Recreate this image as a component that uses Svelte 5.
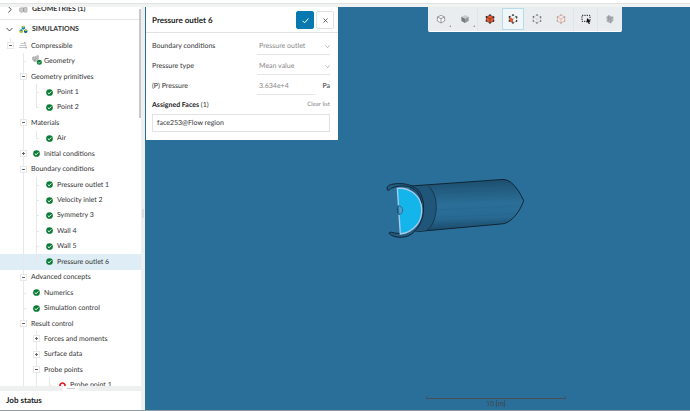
<script lang="ts">
  type Row = { slots: string[]; label: string };

  // one entry per 13px column: line, tee, end, open, closed, or an icon name
  const rows: Row[] = [
    { slots: ["open", "flow"], label: "Compressible" },
    { slots: ["", "tee", "geo"], label: "Geometry" },
    { slots: ["", "open"], label: "Geometry primitives" },
    { slots: ["", "line", "tee", "ok"], label: "Point 1" },
    { slots: ["", "line", "end", "ok"], label: "Point 2" },
    { slots: ["", "open"], label: "Materials" },
    { slots: ["", "line", "end", "ok"], label: "Air" },
    { slots: ["", "closed", "ok"], label: "Initial conditions" },
    { slots: ["", "open"], label: "Boundary conditions" },
    { slots: ["", "line", "tee", "ok"], label: "Pressure outlet 1" },
    { slots: ["", "line", "tee", "ok"], label: "Velocity inlet 2" },
    { slots: ["", "line", "tee", "ok"], label: "Symmetry 3" },
    { slots: ["", "line", "tee", "ok"], label: "Wall 4" },
    { slots: ["", "line", "tee", "ok"], label: "Wall 5" },
    { slots: ["", "line", "end", "ok"], label: "Pressure outlet 6" },
    { slots: ["", "open"], label: "Advanced concepts" },
    { slots: ["", "tee", "ok"], label: "Numerics" },
    { slots: ["", "tee", "ok"], label: "Simulation control" },
    { slots: ["", "open"], label: "Result control" },
    { slots: ["", "line", "closed"], label: "Forces and moments" },
    { slots: ["", "line", "closed"], label: "Surface data" },
    { slots: ["", "line", "open"], label: "Probe points" },
    { slots: ["", "line", "line", "end", "error"], label: "Probe point 1" },
  ];

  const tools = [
    { name: "Wireframe", kind: "outline", more: true },
    { name: "Shaded", kind: "grey", more: true },
    { name: "Select volumes", kind: "volume", sep: true },
    { name: "Select faces", kind: "face" },
    { name: "Select edges", kind: "dots" },
    { name: "Select nodes", kind: "orange" },
    { name: "Box selection", kind: "box", sep: true },
    { name: "Hide selection", kind: "hidden", sep: true },
  ];

  let selected = $state("Pressure outlet 6");
  let activeTool = $state("face");
  let pressure = $state("3.634e+4");
</script>

{#snippet icon(name: string)}
  {#if name === "ok"}
    <svg class="icon" viewBox="0 0 14 14">
      <circle cx="7" cy="7" r="6.7" fill="#087b35" />
      <path d="M3.6 7.2 6.2 9.6 10.6 4.8" fill="none" stroke="#fff" stroke-width="2" />
    </svg>
  {:else if name === "error"}
    <svg class="icon" viewBox="0 0 14 14">
      <circle cx="7" cy="7" r="5" fill="#fff" stroke="#e8141c" stroke-width="3.4" />
    </svg>
  {:else if name === "flow"}
    <svg class="wide" viewBox="0 0 27 24" fill="none" stroke="#888" stroke-width="1.5">
      <path d="M5 6h10l4-2M2 12h16M0 18h23M15 3l5 1-3 4M18 9l4 3-4 3M20 15l4 3-4 3" />
    </svg>
  {:else if name === "geo"}
    <svg class="geo" viewBox="0 0 30 36">
      <path d="M2 12l5-1v13l-5-3zM9 11h3v8l-4 4M14 8h5v9l-6 8H5" fill="#c4c4c4" stroke="#888" stroke-width="1.5" />
      <circle cx="22" cy="28" r="7.500" fill="#087b35" />
      <path d="M18 28l3 3 5-5" fill="none" stroke="#fff" stroke-width="2" />
    </svg>
  {/if}
{/snippet}

{#snippet chevron(down: boolean)}
  <svg class="chevron" viewBox="0 0 12 12" fill="none" stroke="currentColor" stroke-width="1.5">
    <path d={down ? "M1 3.500 6 8.500 11 3.500" : "M4 1 9 6 4 11"} />
  </svg>
{/snippet}

<div class="app">
  <header class="topbar"></header>

  <aside class="sidebar">
    <nav class="tree">
      <button class="section geometries">
        {@render chevron(false)}
        <svg class="wide" viewBox="0 0 27 24" fill="#ccc" stroke="#888" stroke-width="1.5">
          <path d="M2 9l6-3 6 3v9l-6 3-6-3zM14 6l5-3 5 3v13l-5 2-5-3z" />
        </svg>
        GEOMETRIES (1)
      </button>
      <button class="section">
        {@render chevron(true)}
        <svg class="wide" viewBox="0 0 27 24">
          <path d="M13 1l5 3v6l-5 3-5-3V4z" fill="#1687b8" />
          <path d="M7 11l5 3v6l-5 3-6-3v-6z" fill="#b9c92c" />
          <path d="M20 11l5 3v6l-5 3-5-3v-6z" fill="#075f91" />
          <path d="M13 1l5 3-5 3-5-3z" fill="#c7d540" />
          <path d="M20 11l5 3-5 3-5-3z" fill="#d8cf28" />
          <path d="M7 11l5 3-5 3-6-3z" fill="#1b95b8" />
        </svg>
        SIMULATIONS
      </button>
      <ul>
        {#each rows as row}
          <li>
            <button class="row" class:selected={row.label === selected} onclick={() => (selected = row.label)}>
              {#each row.slots as slot}
                <span class="slot {slot}">
                  {#if slot === "open" || slot === "closed"}
                    <svg class="toggle" viewBox="0 0 7 7">
                      <rect x="0.5" y="0.5" width="6" height="6" fill="#fff" stroke="#e8e8e8" />
                      <path d={slot === "open" ? "M2 3.500h3" : "M2 3.500h3M3.500 2v3"} stroke="#666" />
                    </svg>
                  {:else}
                    {@render icon(slot)}
                  {/if}
                </span>
              {/each}
              <span class="label">{row.label}</span>
            </button>
          </li>
        {/each}
      </ul>
      <span class="thumb"></span>
    </nav>
    <div class="splitter"><span class="grip"></span></div>
    <section class="jobs"><h2>Job status</h2></section>
    <span class="side-grip"></span>
  </aside>

  <main class="viewer">
    <form class="panel" onsubmit={(e) => e.preventDefault()}>
      <div class="panel-head">
        <h2>Pressure outlet 6</h2>
        <button class="square apply" aria-label="Apply">
          <svg viewBox="0 0 12 12" fill="none" stroke="#fff" stroke-width="1.7"><path d="M1 6.500 4.500 10 11 2.500" /></svg>
        </button>
        <button class="square" type="button" aria-label="Close">
          <svg viewBox="0 0 12 12" fill="none" stroke="#555" stroke-width="1.5"><path d="M2.500 2.500l7 7M9.500 2.500l-7 7" /></svg>
        </button>
      </div>
      <div class="panel-body">
        <div class="field">
          <label for="bc">Boundary conditions</label>
          <div class="control">
            <select id="bc"><option>Pressure outlet</option></select>
            {@render chevron(true)}
          </div>
        </div>
        <div class="field">
          <label for="ptype">Pressure type</label>
          <div class="control">
            <select id="ptype"><option>Mean value</option></select>
            {@render chevron(true)}
          </div>
        </div>
        <div class="field">
          <label for="pressure">(P) Pressure</label>
          <div class="control number">
            <input id="pressure" type="text" bind:value={pressure} />
            <span class="unit">Pa</span>
          </div>
        </div>
        <div class="field list-head">
          <span><b>Assigned Faces</b> (1)</span>
          <button class="clear" type="button">Clear list</button>
        </div>
        <div class="faces">face253@Flow region</div>
      </div>
    </form>

    <div class="toolbar">
      {#each tools as tool}
        <div class="tool-cell" class:sep={tool.sep}>
          <button class="tool" class:active={tool.kind === activeTool} aria-label={tool.name} onclick={() => (activeTool = tool.kind)}>
            <svg viewBox="0 0 30 30" fill="none">
              {#if tool.kind === "outline"}
                <path d="M15 4 26 9v12l-11 6L4 21V9zM4 9l11 5 11-5M15 14v13" stroke="#777" stroke-width="2" fill="#f7f9fa" />
              {:else if tool.kind === "grey"}
                <path d="M15 3 26 8 15 14 4 8z" fill="#c9cccd" />
                <path d="M4 8l11 6v13L4 21z" fill="#777b7d" />
                <path d="M26 8l-11 6v13l11-6z" fill="#96999b" />
              {:else if tool.kind === "volume"}
                <path d="M15 3 26 9v12l-11 6L4 21V9z" fill="#f0562b" stroke="#54372f" stroke-width="2" />
                <path d="M4 9l11 6 11-6M15 15v12" stroke="#54372f" stroke-width="2" />
                <path d="M15 3 26 9v12l-11 6L4 21V9zM15 15v0" stroke="#222" stroke-width="5" stroke-linecap="round" stroke-dasharray="0 12.400" />
              {:else if tool.kind === "face"}
                <path d="M15 15l11-6v12l-11 6z" fill="#fff" />
                <path d="M4 9l11 6v12L4 21z" fill="#f0562b" />
                <path d="M15 3 26 9v12l-11 6L4 21V9z" stroke="#222" stroke-width="2" stroke-dasharray="4 3" />
                <path d="M4 9l11 6 11-6M15 15v12" stroke="#555" stroke-width="1.5" stroke-dasharray="3 3" />
                <path d="M15 3 26 9v12l-11 6L4 21V9z" stroke="#222" stroke-width="5" stroke-linecap="round" stroke-dasharray="0 12.400" />
              {:else if tool.kind === "dots"}
                <path d="M15 3 26 9v12l-11 6L4 21V9z" stroke="#999" stroke-width="2" stroke-dasharray="3 2" />
                <path d="M4 9l11 6 11-6M15 15v12" stroke="#bbb" stroke-width="2" stroke-dasharray="3 2" />
                <path d="M15 3 26 9v12l-11 6L4 21V9z" stroke="#666" stroke-width="5" stroke-linecap="round" stroke-dasharray="0 12.400" />
              {:else if tool.kind === "orange"}
                <path d="M15 3 26 9v12l-11 6L4 21V9zM4 9l11 6 11-6M15 15v12" stroke="#ed9c83" stroke-width="2" />
                <path d="M15 3 26 9v12l-11 6L4 21V9z" stroke="#999" stroke-width="4" stroke-linecap="round" stroke-dasharray="0 12.400" />
              {:else if tool.kind === "box"}
                <path d="M3 4h24v18H3z" stroke="#222" stroke-width="3" stroke-dasharray="4 3" />
                <path d="M18 12l11 10-5 1 3 6-4 1-2-6-4 3z" fill="#111" />
              {:else}
                <path d="M5 9l6-5 14 5v12l-8 7-12-5z" fill="#aeb3b5" />
                <path d="M5 9l12 4 8-4M17 13v15M11 4v18" stroke="#8b9092" stroke-width="2" />
              {/if}
            </svg>
            {#if tool.more}<span class="more"></span>{/if}
          </button>
        </div>
      {/each}
    </div>

    <svg class="model" viewBox="0 0 450 225" fill="none">
      <defs>
        <linearGradient id="tube" x1="0" y1="0" x2="0.05" y2="1">
          <stop offset="0" stop-color="#1b4b6a" />
          <stop offset="0.22" stop-color="#235c80" />
          <stop offset="0.5" stop-color="#2b6f98" />
          <stop offset="0.75" stop-color="#286a93" />
          <stop offset="1" stop-color="#1a4867" />
        </linearGradient>
      </defs>
      <path d="M92 48 360 29c12-2 24 1 34 9 15 13 28 33 37 54-8 24-23 46-41 60-9 7-17 9-28 10L108 185z" fill="url(#tube)" stroke="#102534" stroke-width="3" />
      <path d="M168 53l205-12M168 69l240-10M168 120l253-13M160 143l245-11M150 163l237-10" stroke="#1d5578" stroke-opacity="0.5" />
      <path d="M92 48l54 1c17 16 26 42 22 77-3 22-11 42-27 55l-34 4z" fill="#1f5679" />
      <path d="M146 49c17 16 26 42 22 77-3 22-11 42-27 55" stroke="#102534" stroke-width="2" />
      <path d="M23 61c-5-10 1-15 12-18 31-6 61 0 79 17 14 16 19 41 16 67-4 35-25 66-53 73-18 4-36 1-47-7-5-4-3-7 4-6 15 4 34 5 48-2 28-14 43-41 43-76 0-36-18-56-44-60-18-3-34 0-47 6-6 3-5 6-11 6z" fill="#225c80" stroke="#102534" stroke-width="3" />
      <path d="M52 55c40-2 70 22 73 60 3 40-24 72-64 77z" fill="#13b5ea" stroke="#a9ccea" stroke-width="4" />
      <path d="M54 107c8 0 14 6 14 13s-4 13-11 14z" fill="#4e9fce" stroke="#286b94" stroke-width="3" />
      <path d="M54 109c-3 7-3 16 3 25" stroke="#15384d" stroke-width="2" />
    </svg>

    <div class="scale"><span class="bar"></span>10 [m]</div>
  </main>
</div>

<style>
  :global(body) {
    background: #f1f2f2;
  }

  .app {
    display: grid;
    grid-template: 7px 1fr / 145px 1fr;
    height: 100vh;
    box-sizing: border-box;
    border-bottom: 1px solid #8c9ba4;
    font: 7px/12px Lato, "Open Sans", sans-serif;
    text-rendering: geometricPrecision;
    color: #333;
  }

  button, input, select {
    font: inherit;
    text-rendering: inherit;
    color: inherit;
    padding: 0;
    margin: 0;
    border: 0;
    border-radius: 0;
    background: none;
    text-align: left;
  }

  button {
    cursor: pointer;
  }

  h2 {
    margin: 0;
    font-size: 8px;
    line-height: 14px;
    font-weight: 700;
    color: #222;
  }

  .topbar {
    grid-column: 1 / -1;
    height: 3px;
    background: #fff;
    border-bottom: 1px solid #e2e2e2;
  }

  .sidebar {
    position: relative;
    display: flex;
    flex-direction: column;
    min-height: 0;
    padding-right: 4px;
    background: #eeefef;
  }

  .tree {
    position: relative;
    flex: 1;
    min-height: 0;
    overflow: hidden;
    background: #fff;
  }

  .section {
    display: flex;
    align-items: center;
    gap: 4px;
    width: 100%;
    height: 18px;
    padding-left: 6px;
    font-weight: 700;
  }

  .geometries {
    box-sizing: border-box;
    height: 21px;
    margin-top: -8px;
    border-bottom: 1px solid #e5e5e5;
  }

  .chevron {
    width: 7px;
    height: 7px;
    margin-right: 2px;
    flex: none;
  }

  .wide {
    width: 9px;
    height: 9px;
    flex: none;
  }

  .geo {
    width: 10px;
    height: 12px;
  }

  .icon {
    width: 7px;
    height: 7px;
  }

  .tree ul {
    display: grid;
    grid-auto-rows: 1fr;
    height: 355px;
    margin: 0;
    padding: 0;
    list-style: none;
  }

  .row {
    display: flex;
    align-items: center;
    width: 100%;
    height: 100%;
    padding-left: 4px;
    white-space: nowrap;
  }

  .row.selected {
    background: #dfeef6;
  }

  .slot {
    position: relative;
    display: flex;
    align-items: center;
    justify-content: center;
    align-self: stretch;
    width: 13px;
    flex: none;
  }

  .line::before, .tee::before, .end::before, .open::before, .closed::before {
    content: "";
    position: absolute;
    left: 6px;
    top: 0;
    bottom: 0;
    border-left: 1px solid #e8e8e8;
  }

  .end::before {
    bottom: 50%;
  }

  .slot.open:first-child::before {
    bottom: 50%;
  }

  .tee::after, .end::after {
    content: "";
    position: absolute;
    left: 6px;
    top: 50%;
    width: 3px;
    border-top: 1px solid #e8e8e8;
  }

  .toggle {
    position: relative;
    width: 7px;
    height: 7px;
  }

  .label {
    padding-left: 1px;
  }

  .thumb {
    position: absolute;
    right: 0;
    top: 2px;
    width: 2px;
    height: 109px;
    background: #c8c8c8;
  }

  .splitter {
    display: flex;
    justify-content: center;
    height: 5px;
    background: #eeefef;
  }

  .grip {
    width: 8px;
    height: 1px;
    border: solid #fff;
    border-width: 2px 4px;
    background: #ccc;
  }

  .side-grip {
    position: absolute;
    right: 1px;
    top: 50%;
    width: 2px;
    height: 9px;
    background: #dcdcdc;
  }

  .jobs {
    padding: 2px 6px 3px;
    background: #fff;
  }

  .viewer {
    position: relative;
    min-width: 0;
    background: #2a6f99;
  }

  .panel {
    width: 192px;
    margin-left: 1px;
    background: #fff;
  }

  .panel-head {
    display: flex;
    align-items: center;
    gap: 2px;
    padding: 4px 4px 3px 6px;
    border-bottom: 1px solid #e2e2e2;
  }

  .panel-head h2 {
    flex: 1;
  }

  .square {
    display: grid;
    place-items: center;
    box-sizing: border-box;
    width: 18px;
    height: 18px;
    border: 1px solid #e2e2e2;
    border-radius: 2px;
  }

  .square svg {
    width: 7px;
    height: 7px;
  }

  .square.apply {
    background: #0878b0;
    border-color: #0878b0;
  }

  .panel-body {
    padding: 3px 8px 8px 6px;
  }

  .field {
    display: flex;
    align-items: center;
    justify-content: space-between;
    height: 20px;
  }

  .list-head {
    height: 18px;
  }

  .control {
    position: relative;
    display: flex;
    align-items: center;
    width: 73px;
    color: #888;
  }

  .control select, .control input {
    appearance: none;
    box-sizing: border-box;
    width: 100%;
    height: 18px;
    padding: 0 2px;
    border-bottom: 1px solid #e5e5e5;
  }

  .control .chevron {
    position: absolute;
    right: 0;
    width: 5px;
    margin: 0;
  }

  .number {
    gap: 7px;
  }

  .number input {
    min-width: 0;
  }

  .unit {
    color: #333;
  }

  b {
    color: #222;
  }

  .clear {
    font-size: 6px;
    color: #888;
  }

  .faces {
    padding: 2px 4px;
    border: 1px solid #e2e2e2;
  }

  .toolbar {
    position: absolute;
    top: 0;
    right: 68px;
    display: flex;
    height: 24px;
    padding: 0 1px;
    background: #e9edf0;
    border-bottom: 1px solid #fff;
    border-radius: 0 0 2px 2px;
  }

  .tool-cell {
    display: grid;
    place-items: center;
    width: 24px;
    box-sizing: border-box;
  }

  .sep {
    border-left: 1px solid #e0e5e8;
  }

  .tool {
    position: relative;
    display: grid;
    place-items: center;
    box-sizing: border-box;
    width: 22px;
    height: 22px;
    border: 1px solid transparent;
  }

  .tool.active {
    background: #f1f6f8;
    border-color: #b5dcea;
  }

  .tool svg {
    width: 10px;
    height: 10px;
  }

  .more {
    position: absolute;
    right: 0;
    bottom: 2px;
    border: solid transparent;
    border-width: 1px;
    border-right-color: #999;
    border-bottom-color: #999;
  }

  .model {
    position: absolute;
    left: 235px;
    top: 163px;
    width: 150px;
    height: 75px;
  }

  .scale {
    position: absolute;
    right: 124px;
    bottom: 0;
    width: 140px;
    font-family: Roboto, sans-serif;
    line-height: 11px;
    text-align: center;
    color: #444;
  }

  .bar {
    display: block;
    height: 2px;
    border: solid #484f55;
    border-width: 0 1px 1px;
  }
</style>
